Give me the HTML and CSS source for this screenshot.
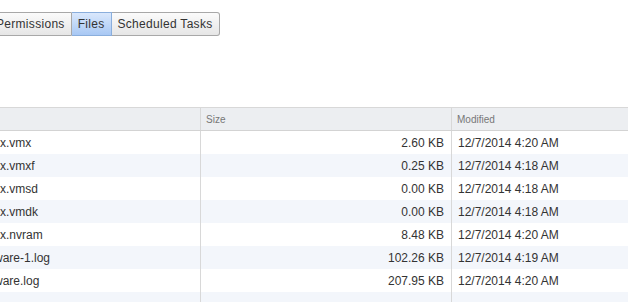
FILE: index.html
```html
<!DOCTYPE html>
<html lang="en">
<head>
    <meta charset="UTF-8">
    <title>Files</title>
    <link rel="stylesheet" href="styles.css">
</head>
<body>
    <div class="page">
        <div class="tabs">
            <button class="tab">Permissions</button>
            <button class="tab active">Files</button>
            <button class="tab">Scheduled Tasks</button>
        </div>

        <table class="grid">
            <thead>
                <tr>
                    <th class="col-name">Name</th>
                    <th class="col-size">Size</th>
                    <th class="col-modified">Modified</th>
                </tr>
            </thead>
            <tbody>
                <tr><td>Minix.vmx</td><td class="num">2.60 KB</td><td>12/7/2014 4:20 AM</td></tr>
                <tr><td>Minix.vmxf</td><td class="num">0.25 KB</td><td>12/7/2014 4:18 AM</td></tr>
                <tr><td>Minix.vmsd</td><td class="num">0.00 KB</td><td>12/7/2014 4:18 AM</td></tr>
                <tr><td>Minix.vmdk</td><td class="num">0.00 KB</td><td>12/7/2014 4:18 AM</td></tr>
                <tr><td>Minix.nvram</td><td class="num">8.48 KB</td><td>12/7/2014 4:20 AM</td></tr>
                <tr><td>vmware-1.log</td><td class="num">102.26 KB</td><td>12/7/2014 4:19 AM</td></tr>
                <tr><td>vmware.log</td><td class="num">207.95 KB</td><td>12/7/2014 4:20 AM</td></tr>
                <tr><td>&nbsp;</td><td class="num"></td><td></td></tr>
            </tbody>
        </table>
    </div>
</body>
</html>
```

FILE: styles.css
```css
body {
    margin: 0;
    font-family: "Liberation Sans", Arial, sans-serif;
    font-size: 12px;
    color: #333;
    background-color: white;
    overflow: hidden;
}

.page {
    margin-left: -31px;
    width: 700px;
}

.tabs {
    display: flex;
    padding-top: 12px;
    margin-left: 20px;
}

.tab {
    font-family: "Liberation Sans", Arial, sans-serif;
    font-size: 12px;
    letter-spacing: 0.3px;
    color: #333;
    height: 24px;
    padding: 0 6px;
    margin: 0;
    border: 1px solid #a8a8a8;
    border-left: none;
    background: linear-gradient(#fbfbfb, #e6e6e6);
}

.tab:first-child {
    border-left: 1px solid #a8a8a8;
    border-radius: 3px 0 0 3px;
}

.tab:last-child {
    border-radius: 0 3px 3px 0;
}

.tab.active {
    background: linear-gradient(#dae8fc, #a8c8f4);
    border-color: #8aaedc;
}

.grid {
    margin-top: 71px;
    border-collapse: collapse;
    width: 690px;
    table-layout: fixed;
}

.grid th {
    height: 22px;
    padding: 0 5px;
    text-align: left;
    font-weight: normal;
    font-size: 10px;
    color: #777;
    background-color: #eceef1;
    border-top: 1px solid #d8d8d8;
    border-bottom: 1px solid #d3d3d3;
}

.grid th.col-name {
    padding-left: 0;
}

.col-name { width: 226px; }
.col-size { width: 240px; }

.grid th + th,
.grid td + td {
    border-left: 1px solid #d8d8d8;
}

.grid td {
    height: 23px;
    padding: 0 8px 0 9px;
    white-space: nowrap;
    color: #333;
}

.grid td.num {
    padding: 0 7px 0 6px;
    text-align: right;
}

.grid td + td.num + td {
    padding-left: 6px;
}

.grid tbody tr:nth-child(even) {
    background-color: #f3f6fb;
}
```
